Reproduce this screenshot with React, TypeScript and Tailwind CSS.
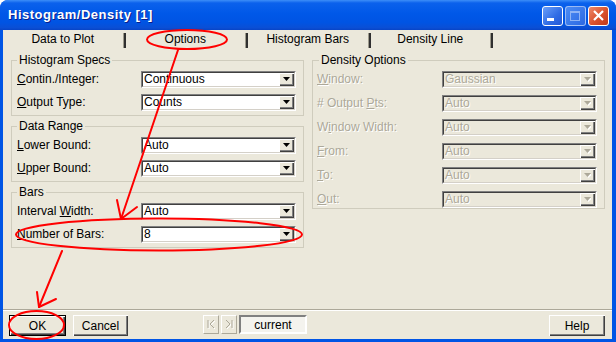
import React from 'react';

const font = "font-['Liberation_Sans',Arial,sans-serif]";
const disabledText = 'text-[#aca899] [text-shadow:1px_1px_0_#ffffff]';

function Arrow({ disabled }: { disabled?: boolean }) {
  return (
    <svg width="7" height="5" viewBox="0 0 7 5">
      {disabled && <polygon points="1,1 8,1 4.5,5" fill="#ffffff" />}
      <polygon points="0,0 7,0 3.5,4" fill={disabled ? '#aca899' : '#000000'} />
    </svg>
  );
}

function Combo({ value, disabled }: { value: string; disabled?: boolean }) {
  return (
    <div className="flex h-[17px] w-[155px] border border-t-[#808080] border-l-[#808080] border-r-white border-b-white">
      <div
        className={`flex flex-1 items-center border border-t-[#404040] border-l-[#404040] border-r-[#d4d0c8] border-b-[#d4d0c8] ${
          disabled ? 'bg-[#ebe8db]' : 'bg-white'
        }`}
      >
        <span className={`flex-1 pl-[1px] text-[12px] leading-[13px] ${disabled ? disabledText : 'text-black'}`}>
          {value}
        </span>
        <div className="flex h-full w-[15px] items-center justify-center bg-[#ebe8db] shadow-[inset_1px_1px_0_#ffffff,inset_-1px_-1px_0_#404040,inset_-2px_-2px_0_#808080]">
          <Arrow disabled={disabled} />
        </div>
      </div>
    </div>
  );
}

function Row({ label, value, disabled, width }: { label: React.ReactNode; value: string; disabled?: boolean; width: string }) {
  return (
    <div className="flex items-center">
      <span className={`${width} text-[12px] leading-[13px] ${disabled ? disabledText : 'text-black'}`}>{label}</span>
      <Combo value={value} disabled={disabled} />
    </div>
  );
}

function Btn({ children, isDefault, width }: { children: React.ReactNode; isDefault?: boolean; width: string }) {
  return (
    <div className={`${width} h-[21px] ${isDefault ? 'border border-black' : ''}`}>
      <div className="flex h-full items-center justify-center bg-[#ebe8db] text-[12px] text-black shadow-[inset_1px_1px_0_#ffffff,inset_-1px_-1px_0_#404040,inset_-2px_-2px_0_#808080]">
        {children}
      </div>
    </div>
  );
}

const tabs = ['Data to Plot', 'Options', 'Histogram Bars', 'Density Line'];

export default function App() {
  return (
    <div className={`relative h-[342px] w-[616px] overflow-hidden bg-white ${font}`}>
      <div className="flex h-full flex-col rounded-t-[8px] bg-[#0055e5] pb-[3px] pl-[3px] pr-[4px]">
        {/* title bar */}
        <div className="-ml-[3px] -mr-[4px] flex h-[30px] shrink-0 items-start rounded-t-[8px] bg-[linear-gradient(180deg,#3d8ef8_0%,#0b61ec_10%,#0058e8_45%,#0054e3_75%,#0a4fd6_92%,#0844c6_100%)]">
          <div className="flex h-[29px] items-center pl-[8px] text-[13px] font-bold tracking-[0.5px] text-white [text-shadow:1px_1px_0_#0a1e8c]">
            Histogram/Density [1]
          </div>
          <div className="ml-auto mt-[6px] flex gap-[2px] pr-[7px]">
            <div className="h-[20px] w-[21px] rounded-[3px] border border-white bg-[linear-gradient(135deg,#6a9ff9_0%,#2f6ce5_60%,#2458d6_100%)]">
              <svg width="19" height="18" viewBox="0 0 19 18">
                <rect x="4" y="11" width="7" height="3" fill="#ffffff" />
              </svg>
            </div>
            <div className="h-[20px] w-[21px] rounded-[3px] border border-white/50 bg-[linear-gradient(135deg,#4d8df5_0%,#2b68e2_100%)]">
              <svg width="19" height="18" viewBox="0 0 19 18">
                <rect x="4.5" y="4.5" width="9" height="9" fill="none" stroke="#8fb4f5" />
                <rect x="4" y="4" width="10" height="2" fill="#8fb4f5" />
              </svg>
            </div>
            <div className="h-[20px] w-[21px] rounded-[3px] border border-white bg-[linear-gradient(135deg,#ef8a6a_0%,#d9512c_55%,#c2381a_100%)]">
              <svg width="19" height="18" viewBox="0 0 19 18">
                <path d="M5 4 L14 13 M14 4 L5 13" stroke="#ffffff" strokeWidth="2.2" />
              </svg>
            </div>
          </div>
        </div>

        {/* body */}
        <div className="flex flex-1 flex-col bg-[#ebe8db] text-black">
          {/* tabs */}
          <div className="flex h-[18px] shrink-0 items-center">
            {tabs.map((t) => (
              <div key={t} className="flex h-full w-[122.5px] items-center">
                <span className="flex-1 text-center text-[12px] leading-[14px]">{t}</span>
                <div className="mt-[3px] h-[15px] w-[3px] border-l border-[#9d9a8c] bg-[#303030]" />
              </div>
            ))}
          </div>

          {/* content */}
          <div className="flex gap-[8px] pl-[8px] pr-[7px] pt-[5px]">
            <div className="flex w-[293px] flex-col">
              <fieldset className="border border-[#cfccbd] px-[5px] pb-[4px] pt-[4px]">
                <legend className="px-[2px] text-[12px] leading-[14px]">Histogram Specs</legend>
                <div className="flex flex-col gap-[6px]">
                  <Row width="w-[124px]" label={<><u>C</u>ontin./Integer:</>} value="Continuous" />
                  <Row width="w-[124px]" label={<><u>O</u>utput Type:</>} value="Counts" />
                </div>
              </fieldset>
              <fieldset className="mt-[3px] border border-[#cfccbd] px-[5px] pb-[4px] pt-[4px]">
                <legend className="px-[2px] text-[12px] leading-[14px]">Data Range</legend>
                <div className="flex flex-col gap-[6px]">
                  <Row width="w-[124px]" label={<><u>L</u>ower Bound:</>} value="Auto" />
                  <Row width="w-[124px]" label={<><u>U</u>pper Bound:</>} value="Auto" />
                </div>
              </fieldset>
              <fieldset className="mt-[3px] border border-[#cfccbd] px-[5px] pb-[4px] pt-[4px]">
                <legend className="px-[2px] text-[12px] leading-[14px]">Bars</legend>
                <div className="flex flex-col gap-[6px]">
                  <Row width="w-[124px]" label={<>Interval <u>W</u>idth:</>} value="Auto" />
                  <Row width="w-[124px]" label={<><u>N</u>umber of Bars:</>} value="8" />
                </div>
              </fieldset>
            </div>

            <fieldset className="w-[293px] self-start border border-[#cfccbd] pb-[0px] pl-[4px] pr-[5px] pt-[4px]">
              <legend className="ml-[2px] px-[2px] text-[12px] leading-[14px]">Density Options</legend>
              <div className="flex flex-col gap-[7px]">
                <Row disabled width="w-[125px]" label={<><u>W</u>indow:</>} value="Gaussian" />
                <Row disabled width="w-[125px]" label={<># Output <u>P</u>ts:</>} value="Auto" />
                <Row disabled width="w-[125px]" label={<>W<u>i</u>ndow Width:</>} value="Auto" />
                <Row disabled width="w-[125px]" label={<><u>F</u>rom:</>} value="Auto" />
                <Row disabled width="w-[125px]" label={<><u>T</u>o:</>} value="Auto" />
                <Row disabled width="w-[125px]" label={<><u>O</u>ut:</>} value="Auto" />
              </div>
            </fieldset>
          </div>

          {/* bottom buttons */}
          <div className="mt-auto border-t border-[#aca899] shadow-[inset_0_1px_0_#ffffff]">
            <div className="flex items-start pb-[3px] pl-[6px] pr-[7px] pt-[5px]">
              <Btn isDefault width="w-[57px]">OK</Btn>
              <div className="ml-[7px]">
                <Btn width="w-[55px]">Cancel</Btn>
              </div>
              <div className="ml-[75px] flex items-center gap-[2px]">
                <div className="flex h-[19px] w-[16px] items-center justify-center border border-t-white border-l-white border-r-[#aca899] border-b-[#aca899]">
                  <svg width="10" height="11" viewBox="0 0 10 11">
                    <path d="M3 2 V10 M9 2 L5 6 L9 10" fill="none" stroke="#ffffff" />
                    <path d="M2 1 V9 M8 1 L4 5 L8 9" fill="none" stroke="#aca899" />
                  </svg>
                </div>
                <div className="flex h-[19px] w-[16px] items-center justify-center border border-t-white border-l-white border-r-[#aca899] border-b-[#aca899]">
                  <svg width="10" height="11" viewBox="0 0 10 11">
                    <path d="M3 2 L7 6 L3 10 M9 2 V10" fill="none" stroke="#ffffff" />
                    <path d="M2 1 L6 5 L2 9 M8 1 V9" fill="none" stroke="#aca899" />
                  </svg>
                </div>
                <div className="flex h-[19px] w-[68px] items-center justify-center border-2 border-t-[#808080] border-l-[#808080] border-r-white border-b-white bg-[#f4f3ee] text-[12px]">
                  current
                </div>
              </div>
              <div className="ml-auto">
                <Btn width="w-[56px]">Help</Btn>
              </div>
            </div>
          </div>
        </div>
      </div>

      {/* red annotations drawn over the dialog */}
      <svg className="pointer-events-none absolute inset-0" width="616" height="342" viewBox="0 0 616 342">
        <g fill="none" stroke="#ff0000" strokeWidth="2" strokeLinecap="round" strokeLinejoin="round">
          <ellipse cx="187" cy="39.5" rx="40" ry="9.5" />
          <ellipse cx="159" cy="234.5" rx="143" ry="16" />
          <ellipse cx="36.5" cy="325" rx="27.5" ry="14" />
          <path d="M178 50 L121 219" />
          <path d="M117 200 L121 219 L137 207" />
          <path d="M62 251 L39 307" />
          <path d="M37 292 L39 307 L56 299" />
        </g>
      </svg>
    </div>
  );
}
